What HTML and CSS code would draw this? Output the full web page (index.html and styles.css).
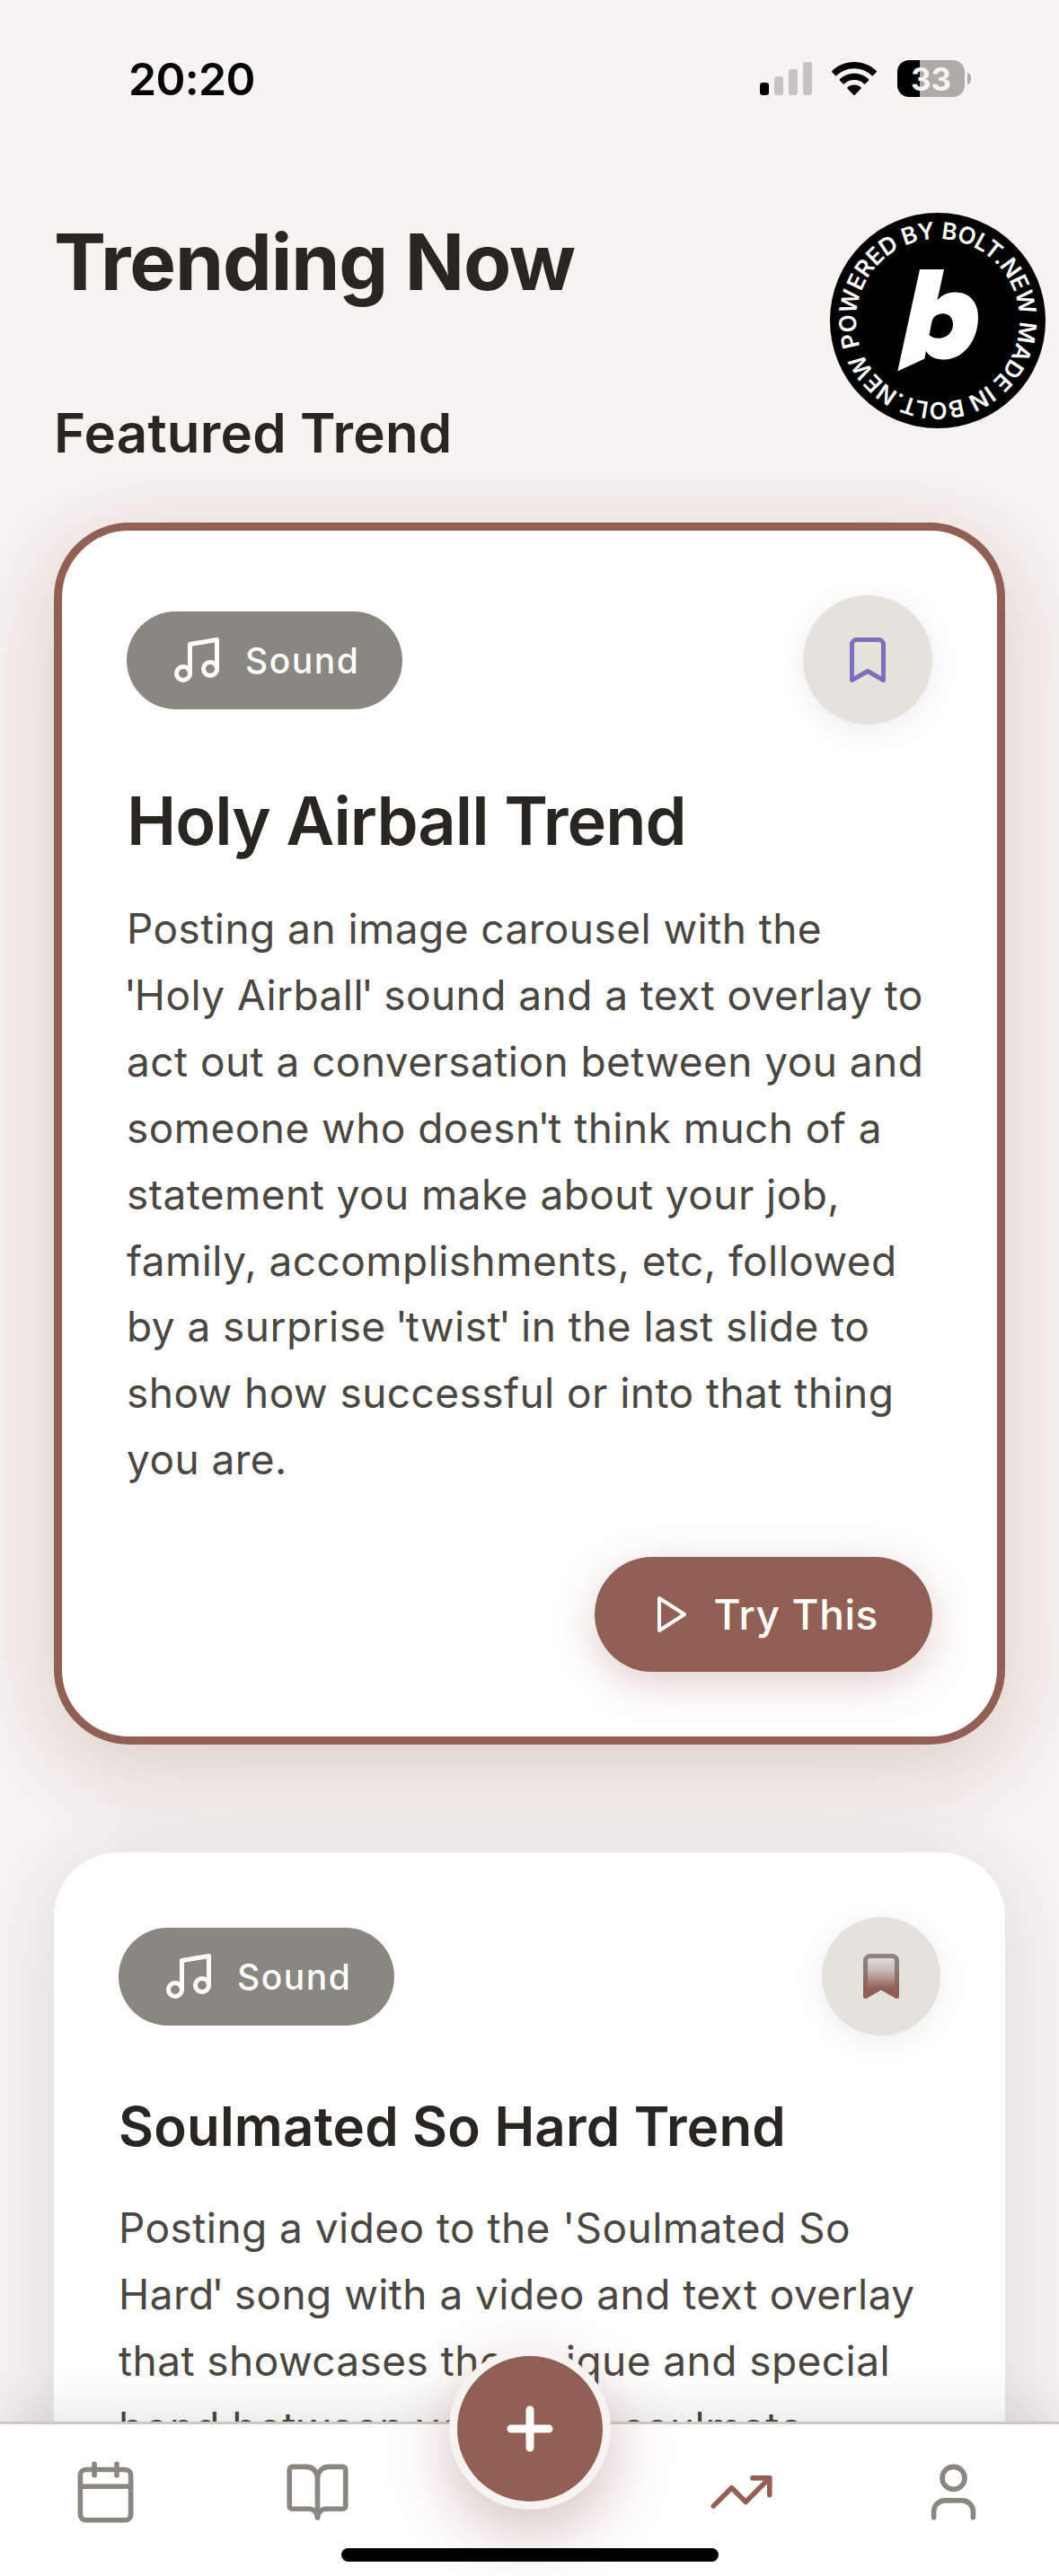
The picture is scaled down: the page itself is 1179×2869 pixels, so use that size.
FILE: index.html
```html
<!DOCTYPE html>
<html lang="en">
<head>
  <meta charset="UTF-8">
  <title>Trending Now</title>
  <link rel="stylesheet" href="styles.css">
</head>
<body>

  <div class="status-bar">
    <span class="time">20:20</span>
    <div class="status-icons">
      <svg class="signal" viewBox="0 0 58 37">
        <rect x="0" y="23" width="10" height="14" rx="3" fill="#000"/>
        <rect x="16" y="16" width="10" height="21" rx="3" fill="#c6c3c0"/>
        <rect x="32" y="8" width="10" height="29" rx="3" fill="#c6c3c0"/>
        <rect x="48" y="0" width="10" height="37" rx="3" fill="#c6c3c0"/>
      </svg>
      <svg class="wifi" viewBox="0 0 50 37">
        <path d="M25 0C34.6 0 43.4 3.8 49.6 9.8a1.2 1.2 0 0 1 0 1.7l-3.5 3.6a1.2 1.2 0 0 1-1.7 0A27.6 27.6 0 0 0 25 7.2 27.6 27.6 0 0 0 5.6 15.1a1.2 1.2 0 0 1-1.7 0L.4 11.5a1.2 1.2 0 0 1 0-1.7C6.6 3.8 15.4 0 25 0z"/>
        <path d="M25 12.7c6.2 0 11.8 2.4 16 6.3a1.2 1.2 0 0 1 0 1.7l-3.6 3.6a1.2 1.2 0 0 1-1.7 0A15.6 15.6 0 0 0 25 20.1a15.6 15.6 0 0 0-10.7 4.2 1.2 1.2 0 0 1-1.7 0L9 20.7a1.2 1.2 0 0 1 0-1.7c4.2-3.9 9.8-6.3 16-6.3z"/>
        <path d="M25 25.4c2.8 0 5.3 1 7.3 2.7a1.2 1.2 0 0 1 0 1.8l-6.4 6.5a1.2 1.2 0 0 1-1.8 0l-6.4-6.5a1.2 1.2 0 0 1 0-1.8c2-1.7 4.5-2.7 7.3-2.7z"/>
      </svg>
      <div class="battery"><span>33</span></div>
    </div>
  </div>

  <!-- Bolt badge -->
  <svg class="bolt-badge" viewBox="0 0 240 240">
    <defs>
      <path id="ring" d="M29 120a91 91 0 0 1 182 0a91 91 0 0 1-182 0"/>
    </defs>
    <circle cx="120" cy="120" r="120" fill="#000"/>
    <text class="ring-text" transform="rotate(-18.5 120 120)"><textPath href="#ring" textLength="564">POWERED BY BOLT.NEW MADE IN BOLT.NEW</textPath></text>
    <path fill="#fff" fill-rule="evenodd" d="M100 63h27l-7.500 34.500c5.500-6.500 12-9 20.500-9 15 0 25 11 25 27.500 0 26-16 47.500-38.500 47.500-9 0-16-3.500-19.500-9.500l-1.700 8.500L75.300 176.500zM126 112.200c-7.500 0-11.800 4.300-12.700 9.800l-2.800 14c2.500 3 6.500 3.700 10.500 3.700 9 0 16-6.700 16-15.500 0-7-4.300-12-11-12z"/>
  </svg>

  <main class="content">
    <h1>Trending Now</h1>
    <h2>Featured Trend</h2>

    <div class="card featured">
      <div class="card-top">
        <div class="tag">
          <svg class="icon-60" viewBox="0 0 24 24"><path d="M9 18V5l12-2v13"/><circle cx="6" cy="18" r="3"/><circle cx="18" cy="16" r="3"/></svg>
          <span>Sound</span>
        </div>
        <button class="save">
          <svg class="icon-60" viewBox="0 0 24 24"><path d="m19 21-7-4-7 4V5a2 2 0 0 1 2-2h10a2 2 0 0 1 2 2z"/></svg>
        </button>
      </div>
      <h3>Holy Airball Trend</h3>
      <p>Posting an image carousel with the<br><span class="q">'</span>Holy Airball<span class="q">'</span> sound and a text overlay to<br>act out a conversation between you and<br>someone who doesn<span class="q">'</span>t think much of a<br>statement you make about your job,<br>family, accomplishments, etc, followed<br>by a surprise <span class="q">'</span>twist<span class="q">'</span> in the last slide to<br>show how successful or into that thing<br>you are.</p>
      <button class="try">
        <svg viewBox="0 0 24 24"><path d="M6 3l14 9-14 9z"/></svg>
        <span>Try This</span>
      </button>
    </div>

    <div class="card">
      <div class="card-top">
        <div class="tag">
          <svg class="icon-60" viewBox="0 0 24 24"><path d="M9 18V5l12-2v13"/><circle cx="6" cy="18" r="3"/><circle cx="18" cy="16" r="3"/></svg>
          <span>Sound</span>
        </div>
        <button class="save saved">
          <svg class="icon-60" viewBox="0 0 24 24">
            <defs>
              <linearGradient id="saveStroke" x1="0" y1="0" x2="0" y2="1">
                <stop offset="0" stop-color="#8a8680"/>
                <stop offset="0.35" stop-color="#8a7a74"/>
                <stop offset="0.8" stop-color="#925f54"/>
                <stop offset="1" stop-color="#925f54"/>
              </linearGradient>
              <linearGradient id="saveFill" x1="0" y1="0" x2="0" y2="1">
                <stop offset="0" stop-color="#e5e1dc"/>
                <stop offset="0.35" stop-color="#c9bcb8"/>
                <stop offset="0.8" stop-color="#925f54"/>
              </linearGradient>
            </defs>
            <path fill="url(#saveFill)" stroke="url(#saveStroke)" d="m19 21-7-4-7 4V5a2 2 0 0 1 2-2h10a2 2 0 0 1 2 2z"/>
          </svg>
        </button>
      </div>
      <h3>Soulmated So Hard Trend</h3>
      <p>Posting a video to the 'Soulmated So<br>Hard<span class="q">'</span> song with a video and text overlay<br>that showcases the unique and special<br>bond between you and a soulmate</p>
    </div>
  </main>

  <nav class="tab-bar">
    <a class="tab"><svg viewBox="0 0 24 24"><path d="M8 2v4M16 2v4M3 10h18"/><rect x="3" y="4" width="18" height="18" rx="2"/></svg></a>
    <a class="tab"><svg viewBox="0 0 24 24"><path d="M12 7v14"/><path d="M3 18a1 1 0 0 1-1-1V4a1 1 0 0 1 1-1h5a4 4 0 0 1 4 4 4 4 0 0 1 4-4h5a1 1 0 0 1 1 1v13a1 1 0 0 1-1 1h-6a3 3 0 0 0-3 3 3 3 0 0 0-3-3z"/></svg></a>
    <a class="tab"></a>
    <a class="tab active"><svg viewBox="0 0 24 24"><path d="M22 7l-8.500 8.500-5-5L2 17"/><path d="M16 7h6v6"/></svg></a>
    <a class="tab"><svg viewBox="0 0 24 24"><path d="M19 21v-2a4 4 0 0 0-4-4H9a4 4 0 0 0-4 4v2"/><circle cx="12" cy="7" r="4"/></svg></a>
    <button class="add"><svg viewBox="0 0 24 24"><path d="M5 12h14M12 5v14"/></svg></button>
    <div class="home-indicator"></div>
  </nav>

</body>
</html>
```
FILE: styles.css
```css
* {
  box-sizing: border-box;
}

body {
  margin: 0;
  height: 2869px;
  overflow: hidden;
  position: relative;
  background-color: #f6f3f0;
  font-family: Inter, "Liberation Sans", sans-serif;
  color: #292521;
}

svg {
  display: block;
  flex-shrink: 0;
  overflow: visible;
  fill: none;
  stroke: currentColor;
  stroke-width: 2;
  stroke-linecap: round;
  stroke-linejoin: round;
}

button {
  border: none;
  padding: 0;
  font-family: inherit;
  cursor: pointer;
}

/* status bar */
.status-bar {
  display: flex;
  justify-content: space-between;
  height: 177px;
  padding: 67px 98px 0 143px;
  color: #000;
}

.time {
  font-size: 50px;
  font-weight: 600;
  line-height: 42px;
  letter-spacing: -0.7px;
}

.status-icons {
  display: flex;
  align-items: flex-start;
}

.signal,
.wifi {
  stroke: none;
  fill: #000;
  height: 37px;
  margin-top: 2px;
}

.signal {
  width: 58px;
}

.wifi {
  width: 50px;
  margin-left: 22px;
}

.battery {
  position: relative;
  width: 75px;
  height: 41px;
  margin-left: 23px;
  margin-right: 7px;
  border-radius: 13px;
  background: linear-gradient(to right, #000 25px, #aeaaa7 25px);
  color: #f6f3f0;
  font-size: 35px;
  font-weight: 700;
  line-height: 42px;
  text-align: center;
}

.battery::after {
  content: "";
  position: absolute;
  right: -7px;
  top: 14px;
  width: 4px;
  height: 13px;
  border-radius: 0 4px 4px 0 / 0 6px 6px 0;
  background: #aeaaa7;
}

/* badge */
.bolt-badge {
  position: absolute;
  z-index: 5;
  top: 237px;
  right: 15px;
  width: 240px;
  height: 240px;
  stroke: none;
}

.ring-text {
  font-size: 26px;
  font-weight: 600;
  fill: #fff;
}

/* content */
.content {
  padding: 64px 60px 0;
}

h1 {
  margin: 0;
  font-size: 87px;
  font-weight: 700;
  line-height: 101px;
  letter-spacing: -1.1px;
}

h2 {
  margin: 104px 0 64px;
  font-size: 60px;
  font-weight: 600;
  line-height: 72px;
  letter-spacing: 0.2px;
}

.card {
  padding: 72px;
  background: #fff;
  border-radius: 72px;
  box-shadow: 0 12px 96px rgba(30, 20, 10, 0.11);
}

.card.featured {
  height: 1361px;
  margin-bottom: 120px;
  border: 9px solid #925f54;
  border-radius: 84px;
  box-shadow: 0 24px 84px rgba(160, 84, 80, 0.18), 0 24px 140px rgba(60, 50, 20, 0.06);
}

.card-top {
  display: flex;
  justify-content: space-between;
  align-items: center;
}

.tag {
  display: flex;
  align-items: center;
  gap: 24px;
  height: 109px;
  padding: 0 48px;
  border-radius: 60px;
  background: #8a8680;
  color: #fff;
  font-size: 39px;
  font-weight: 500;
  letter-spacing: 1.5px;
}

.icon-60 {
  width: 60px;
  height: 60px;
}

.save {
  display: flex;
  align-items: center;
  justify-content: center;
  width: 144px;
  height: 144px;
  border-radius: 50%;
  background: #e5e2dc;
  color: #7c6fbb;
  box-shadow: 0 6px 36px rgba(0, 0, 0, 0.08);
}

.save.saved {
  width: 132px;
  height: 132px;
}

h3 {
  margin: 62px 0 38px;
  font-size: 60px;
  font-weight: 600;
  line-height: 78px;
  letter-spacing: 0.2px;
}

.featured h3 {
  margin-top: 62px;
  margin-bottom: 39px;
  font-size: 74px;
  line-height: 90px;
  letter-spacing: -1px;
}

p {
  margin: 0;
  font-size: 46px;
  line-height: 73.9px;
  letter-spacing: 0.45px;
  color: #4a4641;
  white-space: nowrap;
}

/* tighter straight quotes */
.q {
  margin-left: -3px;
  letter-spacing: -2px;
}

.try {
  display: flex;
  align-items: center;
  gap: 24px;
  height: 128px;
  margin: 71px 0 0 auto;
  padding: 0 60px;
  border-radius: 64px;
  background: #925f54;
  color: #fff;
  font-size: 46px;
  font-weight: 500;
  letter-spacing: 0.6px;
  box-shadow: 0 12px 48px rgba(146, 95, 84, 0.3);
}

.try svg {
  width: 48px;
  height: 48px;
}

/* bottom tabs */
.tab-bar {
  position: absolute;
  left: 0;
  right: 0;
  bottom: 0;
  display: flex;
  height: 172px;
  padding-top: 38px;
  border-top: 3px solid #d0c9c3;
  background: #fff;
  box-shadow: 0 -12px 60px rgba(0, 0, 0, 0.1);
}

.tab {
  display: flex;
  flex: 1;
  justify-content: center;
  color: #8a8680;
}

.tab svg {
  width: 75px;
  height: 75px;
  stroke-width: 1.8;
}

.tab.active {
  color: #925f54;
}

.add {
  position: absolute;
  top: -85px;
  left: 500px;
  display: flex;
  align-items: center;
  justify-content: center;
  width: 180px;
  height: 180px;
  border: 9px solid #f6f3f0;
  border-radius: 50%;
  background: #925f54;
  color: #fff;
  box-shadow: 0 24px 72px rgba(146, 95, 84, 0.4);
}

.add svg {
  width: 72px;
  height: 72px;
  stroke-width: 3;
}

.home-indicator {
  position: absolute;
  left: 380px;
  bottom: 16px;
  width: 420px;
  height: 15px;
  border-radius: 8px;
  background: #000;
}
```
